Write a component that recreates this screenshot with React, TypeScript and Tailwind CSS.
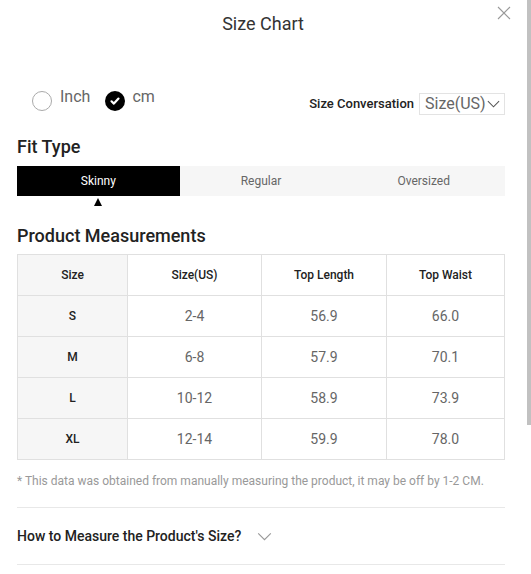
import React from "react";

const rows = [
  { size: "S", us: "2-4", length: "56.9", waist: "66.0" },
  { size: "M", us: "6-8", length: "57.9", waist: "70.1" },
  { size: "L", us: "10-12", length: "58.9", waist: "73.9" },
  { size: "XL", us: "12-14", length: "59.9", waist: "78.0" },
];

function Chevron({ className }: { className?: string }) {
  return (
    <svg viewBox="0 0 16 10" className={className} fill="none" stroke="currentColor" strokeWidth="1.3">
      <path d="M1 1.5l7 7 7-7" />
    </svg>
  );
}

export default function App() {
  return (
    <div
      className="relative w-[531px] h-[574px] bg-white overflow-hidden text-[#222]"
      style={{ fontFamily: "Roboto, 'Liberation Sans', sans-serif" }}
    >
      <div className="absolute right-0 top-0 w-[4px] h-[425px] bg-[#c1c1c1]" />

      <div className="w-[521px] pl-[17px] pr-[16px]">
        <div className="relative h-[48px] flex items-center justify-center">
          <h1 className="text-[18px] text-[#333] mt-[-1px] ml-[4px]">Size Chart</h1>
          <button className="absolute right-[-6px] top-[6px] text-[#999]">
            <svg viewBox="0 0 14 14" className="w-[14px] h-[14px]" stroke="currentColor" strokeWidth="1.1">
              <path d="M1 1l12 12M13 1L1 13" />
            </svg>
          </button>
        </div>

        <div className="flex items-end justify-between mt-[39px] h-[28px]">
          <div className="flex items-center ml-[15px] mb-[4px]">
            <span className="w-[20px] h-[20px] rounded-full border border-[#aaa]" />
            <span className="ml-[8px] text-[16px] text-[#666] mt-[-9px]">Inch</span>
            <span className="ml-[15px] w-[20px] h-[20px] rounded-full bg-black flex items-center justify-center">
              <svg viewBox="0 0 12 12" className="w-[12px] h-[12px]" fill="none" stroke="white" strokeWidth="2.2" strokeLinecap="round" strokeLinejoin="round">
                <path d="M2.5 6.3l2.4 2.3L9.5 3.6" />
              </svg>
            </span>
            <span className="ml-[7px] text-[16px] text-[#666] mt-[-9px]">cm</span>
          </div>
          <div className="flex items-center">
            <span className="text-[13px] font-medium text-[#222]">Size Conversation</span>
            <span className="ml-[5px] h-[22px] w-[86px] border border-[#e3e3e3] flex items-center pl-[5px] text-[16px] text-[#666]">
              Size(US)
              <Chevron className="w-[13px] h-[8px] ml-[1px] text-[#555]" />
            </span>
          </div>
        </div>

        <h2 className="text-[18px] font-medium mt-[20px] leading-[24px]">Fit Type</h2>
        <div className="grid grid-cols-3 mt-[7px] h-[30px] bg-[#f6f6f6] text-[12px]">
          <div className="bg-black text-white flex items-center justify-center">Skinny</div>
          <div className="text-[#666] flex items-center justify-center">Regular</div>
          <div className="text-[#666] flex items-center justify-center">Oversized</div>
        </div>
        <div className="grid grid-cols-3 h-[10px]">
          <div className="flex justify-center pt-[2px]">
            <svg viewBox="0 0 8 8" className="w-[8px] h-[8px]">
              <path d="M4 0L8 8H0z" fill="black" />
            </svg>
          </div>
        </div>

        <h2 className="text-[18px] font-medium mt-[18px] leading-[24px]">Product Measurements</h2>

        <table className="mt-[6px] w-full border-collapse text-center">
          <thead>
            <tr className="h-[41px] text-[12px] font-medium">
              <th className="w-[110px] border border-[#e0e0e0] bg-[#f6f6f6] font-medium">Size</th>
              <th className="w-[134px] border border-[#e0e0e0] font-medium">Size(US)</th>
              <th className="w-[125px] border border-[#e0e0e0] font-medium">Top Length</th>
              <th className="border border-[#e0e0e0] font-medium">Top Waist</th>
            </tr>
          </thead>
          <tbody>
            {rows.map((r) => (
              <tr key={r.size} className="h-[41px]">
                <td className="border border-[#e0e0e0] bg-[#f6f6f6] text-[12px] font-medium">{r.size}</td>
                <td className="border border-[#e0e0e0] text-[14px] text-[#666]">{r.us}</td>
                <td className="border border-[#e0e0e0] text-[14px] text-[#666]">{r.length}</td>
                <td className="border border-[#e0e0e0] text-[14px] text-[#666]">{r.waist}</td>
              </tr>
            ))}
          </tbody>
        </table>

        <p className="mt-[12px] text-[12px] text-[#999]">
          * This data was obtained from manually measuring the product, it may be off by 1-2 CM.
        </p>

        <div className="mt-[17px] border-t border-[#e8e8e8]" />
        <div className="h-[56px] flex items-center">
          <span className="text-[14px] font-medium text-[#222]">How to Measure the Product's Size?</span>
          <Chevron className="w-[15px] h-[9px] ml-[16px] text-[#999]" />
        </div>
        <div className="border-t border-[#e8e8e8]" />
      </div>
    </div>
  );
}
